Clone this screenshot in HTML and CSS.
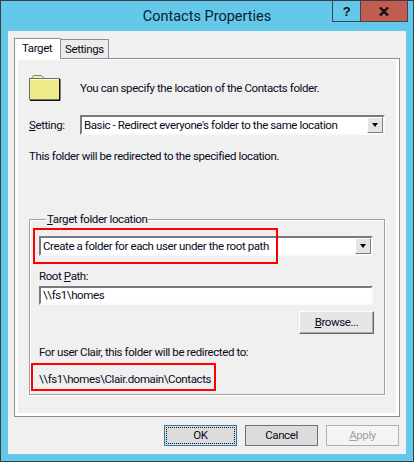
FILE: index.html
```html
<!DOCTYPE html>
<html>
<head>
    <meta charset="utf-8">
    <title>Contacts Properties</title>
    <link rel="stylesheet" href="styles.css">
</head>
<body>
<div class="window">
    <div class="titlebar">
        <span></span>
        <div class="title">Contacts Properties</div>
        <div class="caption">
            <div class="capBtn help">?</div>
            <div class="capBtn close">
                <svg width="10" height="9" viewBox="0 0 10 9"><path d="M1 0.5 L9 8.5 M9 0.5 L1 8.5" stroke="#111" stroke-width="2.4" fill="none"/></svg>
            </div>
        </div>
    </div>
    <div class="client">
        <div class="tabs">
            <div class="tab active">Target</div>
            <div class="tab">Settings</div>
        </div>
        <div class="panel">
            <div class="page">
                <div class="intro">
                    <svg class="folder" width="32" height="26" viewBox="0 0 32 26">
                        <defs>
                            <pattern id="dither" width="2" height="2" patternUnits="userSpaceOnUse">
                                <rect width="2" height="2" fill="#f8f430"/>
                                <rect width="1" height="1" fill="#e2e2e2"/>
                                <rect x="1" y="1" width="1" height="1" fill="#e2e2e2"/>
                            </pattern>
                        </defs>
                        <path d="M2.5 3.5 L4.5 0.5 H12.5 L15.5 3.5 Z" fill="#f0f0a0" stroke="#808080"/>
                        <rect x="0.5" y="3.5" width="30" height="21" fill="url(#dither)" stroke="#707070"/>
                        <path d="M1 4.5 H30" stroke="#fafad0" fill="none"/>
                        <path d="M31 4 V25.5 H1 M30.5 4 V25" stroke="#111" fill="none"/>
                    </svg>
                    <span>You can specify the location of the Contacts folder.</span>
                </div>
                <div class="settingRow">
                    <span class="settingLabel"><u>S</u>etting:</span>
                    <div class="combo">
                        <span class="comboText">Basic - Redirect everyone's folder to the same location</span>
                        <span class="arrow"></span>
                    </div>
                </div>
                <div class="note">This folder will be redirected to the specified location.</div>
                <fieldset class="group">
                    <legend><u>T</u>arget folder location</legend>
                    <div class="combo wide">
                        <span class="comboText">Create a folder for each user under the root path</span>
                        <span class="arrow"></span>
                    </div>
                    <div class="rootLabel">Root <u>P</u>ath:</div>
                    <div class="field">\\fs1\homes</div>
                    <div class="browseRow"><div class="browse"><u>B</u>rowse...</div></div>
                    <div class="forUser">For user Clair, this folder will be redirected to:</div>
                    <div class="path">\\fs1\homes\Clair.domain\Contacts</div>
                    <div class="mark markCombo"></div>
                    <div class="mark markPath"></div>
                </fieldset>
            </div>
        </div>
        <div class="footer">
            <div class="btn ok"><span class="focus">OK</span></div>
            <div class="btn">Cancel</div>
            <div class="btn off"><span><u>A</u>pply</span></div>
        </div>
    </div>
</div>
</body>
</html>
```
FILE: styles.css
```css
* {
    box-sizing: border-box;
}

body {
    margin: 0;
    font-family: Roboto, "Liberation Sans", sans-serif;
    font-size: 11.5px;
    letter-spacing: -0.4px;
    color: #0a0a20;
}

.window {
    width: 414px;
    height: 462px;
    background: #63c8ea;
    border: 1px solid #3a3f44;
    display: flex;
    flex-direction: column;
}

.titlebar {
    height: 30px;
    display: grid;
    grid-template-columns: 1fr auto 1fr;
    padding: 0 5px;
    flex: none;
}

.title {
    font-size: 14.5px;
    letter-spacing: 0;
    line-height: 31px;
    color: #10202c;
}

.caption {
    justify-self: end;
    display: flex;
    height: 21px;
    border: 1px solid #3a4650;
    border-top: 0;
}

.capBtn {
    display: flex;
    align-items: center;
    justify-content: center;
}

.help {
    width: 28px;
    border-right: 1px solid #3a4650;
    font-family: "Liberation Sans", sans-serif;
    font-weight: bold;
    font-size: 13px;
    color: #111;
}

.close {
    width: 46px;
    background: #c25b50;
}

.client {
    flex: 1;
    margin: 0 7px 7px;
    background: #f0f0f0;
    padding: 7px 6px 0;
    display: flex;
    flex-direction: column;
}

.tabs {
    display: flex;
    height: 21px;
    align-items: flex-end;
    position: relative;
    z-index: 1;
    margin-bottom: -1px;
}

.tab {
    height: 19px;
    width: 49px;
    margin-left: -1px;
    margin-bottom: 1px;
    border: 1px solid #8c8f98;
    border-bottom: 0;
    background: #ececec;
    padding-left: 4px;
    line-height: 19px;
}

.tab.active {
    height: 21px;
    width: 47px;
    margin-left: 0;
    margin-bottom: 0;
    background: #fff;
    padding-left: 7px;
    line-height: 18px;
    z-index: 1;
    position: relative;
}

.panel {
    height: 359px;
    border: 1px solid #8c8f98;
    flex: none;
}

.page {
    height: 100%;
    background: #f0f0f0;
    border: 3px solid #fff;
    border-top-width: 1px;
    padding: 14px 11px 0;
}

.intro {
    display: flex;
    align-items: center;
    gap: 19px;
    height: 27px;
}

.settingRow {
    display: flex;
    align-items: center;
    margin-top: 14px;
}

.settingLabel {
    width: 51px;
}

.combo {
    width: 305px;
    height: 20px;
    background: #fff;
    border: 2px solid #7a7a7a;
    border-right-color: #fafafa;
    border-bottom-color: #fafafa;
    display: flex;
    align-items: center;
    justify-content: space-between;
    padding-left: 2px;
}

.combo.wide {
    width: 334px;
    margin-top: 10px;
}

.comboText {
    white-space: nowrap;
}

.arrow {
    width: 16px;
    height: 16px;
    background: #e4e4e4;
    border: 1px solid #808080;
    border-top-color: #fff;
    border-left-color: #fff;
    display: flex;
    align-items: center;
    justify-content: center;
}

.arrow::after {
    content: "";
    border: 3.5px solid transparent;
    border-top: 4px solid #000;
    border-bottom: 0;
}

.note {
    margin-top: 13px;
    line-height: 16px;
}

.group {
    position: relative;
    width: 356px;
    height: 183px;
    margin: 48px 0 0;
    padding: 0 0 0 9px;
    border: 1px solid #a0a0a0;
    box-shadow: 1px 1px 0 #fff, inset 1px 1px 0 #fff;
}

.group legend {
    padding: 0 1px;
    margin-left: 7px;
    line-height: 14px;
    background: #f0f0f0;
}

.rootLabel {
    margin-top: 12px;
    line-height: 16px;
}

.field {
    width: 334px;
    height: 19px;
    background: #fff;
    border: 2px solid #7a7a7a;
    border-right-color: #fafafa;
    border-bottom-color: #fafafa;
    padding-left: 2px;
    line-height: 15px;
    margin-top: 2px;
}

.browseRow {
    display: flex;
    justify-content: flex-end;
    width: 335px;
    margin-top: 6px;
}

.browse {
    width: 75px;
    height: 23px;
    background: #e6e6e6;
    border: 1px solid #666;
    border-top-color: #fff;
    border-left-color: #fff;
    box-shadow: inset -1px -1px 0 #aaa;
    text-align: center;
    line-height: 20px;
}

.forUser {
    margin-top: 10px;
    line-height: 16px;
}

.path {
    margin-top: 11px;
    line-height: 16px;
}

/* red annotation boxes drawn over the dialog */
.mark {
    position: absolute;
    border: 2px solid #f00;
}

.markCombo {
    left: 3px;
    top: 2px;
    width: 245px;
    height: 36px;
}

.markPath {
    left: 1px;
    top: 137px;
    width: 185px;
    height: 28px;
}

.footer {
    display: flex;
    justify-content: flex-end;
    gap: 8px;
    margin-top: 8px;
    padding-right: 1px;
}

.btn {
    width: 73px;
    height: 21px;
    background: #dcdcdc;
    border: 1px solid #707070;
    text-align: center;
    line-height: 19px;
}

.btn.ok {
    border-color: #2b7ab5;
    padding: 1px;
    line-height: 15px;
}

.focus {
    display: block;
    height: 100%;
    border: 1px dotted #111;
}

.btn.off {
    background: #f4f4f4;
    border-color: #adb2b5;
    color: #a0a0a0;
}
```
